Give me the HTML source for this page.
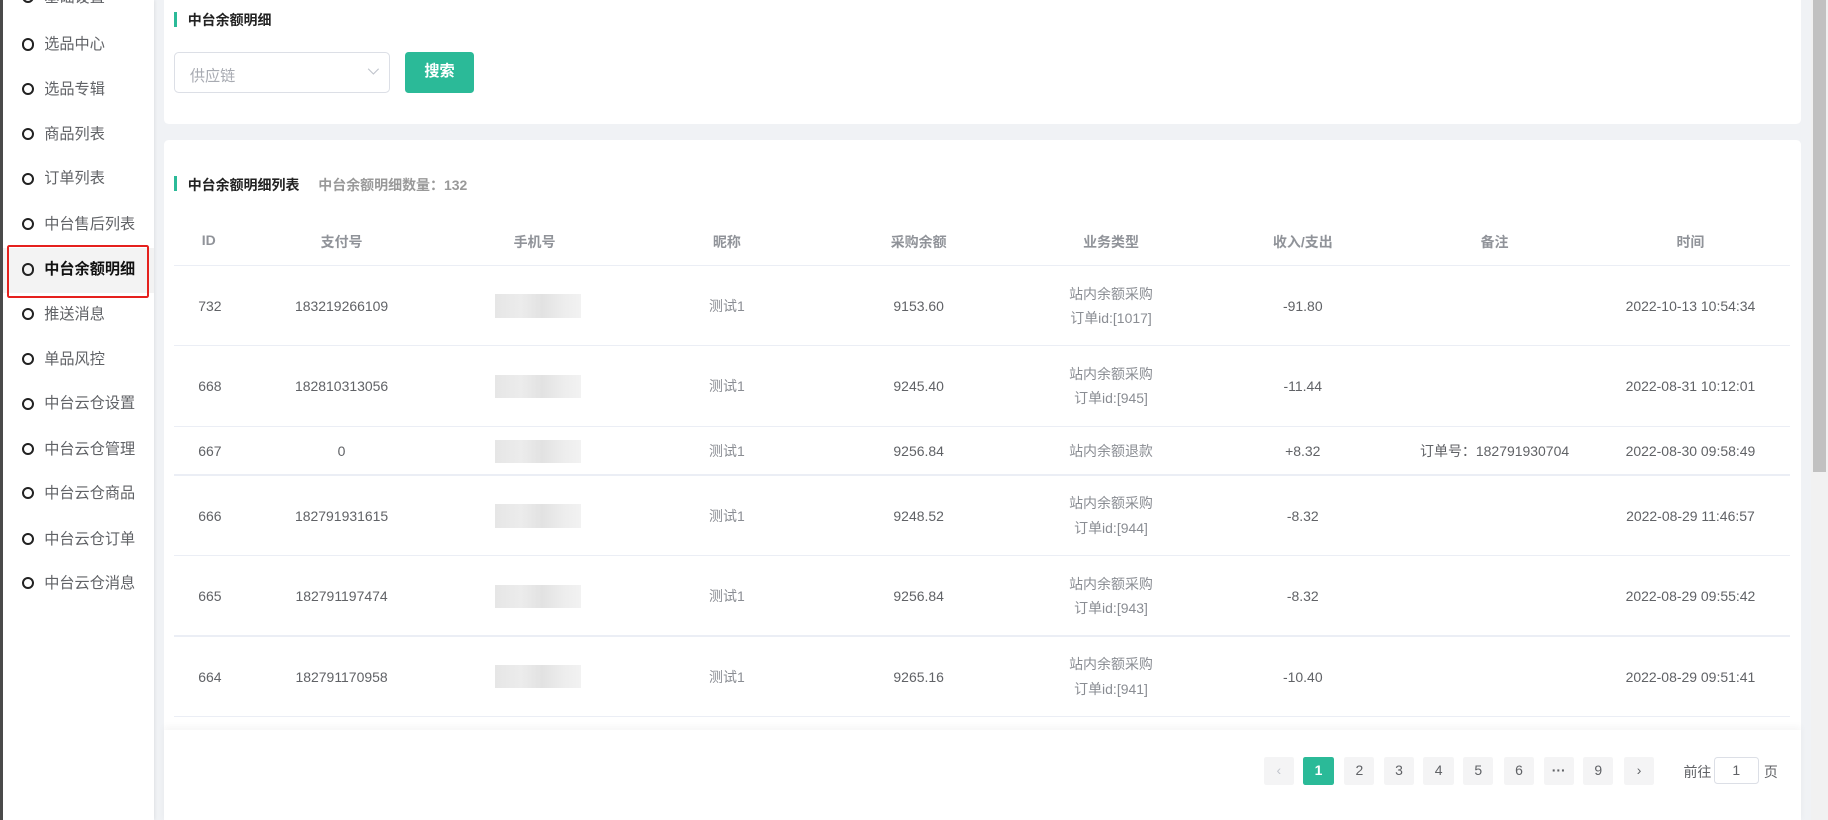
<!DOCTYPE html>
<html><head><meta charset="utf-8">
<style>
html,body{margin:0;padding:0;}
body{width:1828px;height:820px;overflow:hidden;background:#f0f2f5;font-family:"Liberation Sans","Noto Sans CJK SC",sans-serif;}
#w{position:relative;width:1568px;height:703px;zoom:1.16582;background:#f0f2f5;overflow:hidden;}
.abs{position:absolute;}
#side{left:0;top:0;width:132px;height:703px;background:#fff;box-shadow:1px 0 3px rgba(0,0,0,.08);}
#side .strip{left:0;top:0;width:3px;height:703px;background:#4a4a4a;}
.mi{position:absolute;left:3px;width:129px;height:38px;line-height:38px;font-size:13px;color:#606266;}
.mi i{position:absolute;left:16px;top:13px;width:7px;height:7px;border:2px solid #222;border-radius:50%;}
.mi span{position:absolute;left:35px;}
.mi.act{background:#f3f3f3;font-weight:bold;color:#111;}
#red{left:6px;top:210px;width:118px;height:42px;border:2px solid #e5201d;border-radius:2px;}
.card{background:#fff;border-radius:4px;}
.tt{position:absolute;font-size:12px;font-weight:bold;color:#222;}
.bar{position:absolute;width:3px;height:13px;background:#2bba98;}
.sel{left:149px;top:45px;width:184px;height:33px;border:1px solid #dcdfe6;border-radius:4px;background:#fff;}
.btn{left:347px;top:45px;width:60px;height:35px;background:#2bba98;border-radius:3px;color:#fff;font-size:13px;font-weight:bold;text-align:center;line-height:35px;}
.th,.td{position:absolute;text-align:center;font-size:12px;}
.th{color:#909399;font-weight:bold;top:199px;}
.td{color:#606266;}
.hl{position:absolute;left:149px;width:1386px;height:1px;background:#ebeef5;}
.blur{position:absolute;width:73px;height:20px;background:linear-gradient(90deg,#e6e6e6,#ececec 30%,#e2e2e2 55%,#ededed 80%,#f2f2f2);}
.pg{position:absolute;top:649px;width:26px;height:24px;background:#f4f4f5;border-radius:2px;font-size:12px;color:#606266;text-align:center;line-height:24px;}
</style></head><body><div id="w">
<div id="side" class="abs">
<div class="strip abs"></div>
<div class="mi" style="top:-21px"><i></i><span>基础设置</span></div>
<div class="mi" style="top:20px"><i></i><span>选品中心</span></div>
<div class="mi" style="top:58px"><i></i><span>选品专辑</span></div>
<div class="mi" style="top:97px"><i></i><span>商品列表</span></div>
<div class="mi" style="top:135px"><i></i><span>订单列表</span></div>
<div class="mi" style="top:174px"><i></i><span>中台售后列表</span></div>
<div class="mi act" style="top:213px"><i></i><span>中台余额明细</span></div>
<div class="mi" style="top:251px"><i></i><span>推送消息</span></div>
<div class="mi" style="top:290px"><i></i><span>单品风控</span></div>
<div class="mi" style="top:328px"><i></i><span>中台云仓设置</span></div>
<div class="mi" style="top:367px"><i></i><span>中台云仓管理</span></div>
<div class="mi" style="top:405px"><i></i><span>中台云仓商品</span></div>
<div class="mi" style="top:444px"><i></i><span>中台云仓订单</span></div>
<div class="mi" style="top:482px"><i></i><span>中台云仓消息</span></div>
</div>
<div id="red" class="abs"></div>

<div class="card abs" style="left:141px;top:-4px;width:1404px;height:110px"></div>
<div class="bar" style="left:149px;top:10px"></div>
<div class="tt" style="left:161px;top:9px">中台余额明细</div>
<div class="sel abs"><span class="abs" style="left:13px;top:9px;font-size:13px;color:#a8abb2">供应链</span>
<svg class="abs" style="left:165px;top:12px" width="11" height="8" viewBox="0 0 11 8"><path d="M1 1.5L5.5 6L10 1.5" fill="none" stroke="#c0c4cc" stroke-width="1"/></svg></div>
<div class="btn abs">搜索</div>

<div class="card abs" style="left:141px;top:120px;width:1404px;height:600px"></div>
<div class="bar" style="left:149px;top:151px"></div>
<div class="tt" style="left:161px;top:150px">中台余额明细列表</div>
<div class="tt" style="left:273px;top:150px;color:#999">中台余额明细数量：132</div>

<div class="th" style="left:149px;width:60px">ID</div>
<div class="th" style="left:210px;width:166px">支付号</div>
<div class="th" style="left:376px;width:165px">手机号</div>
<div class="th" style="left:541px;width:165px">昵称</div>
<div class="th" style="left:706px;width:164px">采购余额</div>
<div class="th" style="left:870px;width:166px">业务类型</div>
<div class="th" style="left:1036px;width:163px">收入/支出</div>
<div class="th" style="left:1199px;width:166px">备注</div>
<div class="th" style="left:1365px;width:170px">时间</div>
<div class="hl" style="top:227px"></div>
<div class="hl" style="top:296px"></div>
<div class="hl" style="top:365px"></div>
<div class="hl" style="top:407px"></div>
<div class="hl" style="top:476px"></div>
<div class="hl" style="top:545px"></div>
<div class="hl" style="top:614px"></div>

<div id="rows"></div>
<script>
var rows=[
[228,69,"732","183219266109","9153.60","站内余额采购<br>订单id:[1017]","-91.80","","2022-10-13 10:54:34"],
[297,69,"668","182810313056","9245.40","站内余额采购<br>订单id:[945]","-11.44","","2022-08-31 10:12:01"],
[366,42,"667","0","9256.84","站内余额退款","+8.32","订单号：182791930704","2022-08-30 09:58:49"],
[408,69,"666","182791931615","9248.52","站内余额采购<br>订单id:[944]","-8.32","","2022-08-29 11:46:57"],
[477,69,"665","182791197474","9256.84","站内余额采购<br>订单id:[943]","-8.32","","2022-08-29 09:55:42"],
[546,69,"664","182791170958","9265.16","站内余额采购<br>订单id:[941]","-10.40","","2022-08-29 09:51:41"]];
var cols=[[149,60],[210,166],[541,165],[706,164],[870,166],[1036,163],[1199,166],[1365,170]];
var h="";
rows.forEach(function(r){
 var c=r[0]+r[1]/2;
 var vals=[r[2],r[3],"测试1",r[4],r[5],r[6],r[7],r[8]];
 vals.forEach(function(v,i){
  var two=v.indexOf("<br>")>=0;
  var top=two?c-21:c-7;
  var col=(i==4||i==2)?"#8a8d93":"#606266";
  var left=i==0?cols[i][0]+21:cols[i][0];var w=i==0?40:cols[i][1];
  h+='<div class="td" style="left:'+left+'px;width:'+w+'px;top:'+top+'px;line-height:'+(two?21:14)+'px;color:'+col+';text-align:'+(i==0?'left':'center')+'">'+v+'</div>';
 });
 h+='<div class="blur" style="left:425px;top:'+(c-10)+'px"></div>';
});
document.getElementById("rows").innerHTML=h;
</script>

<div class="abs" style="left:141px;top:626px;width:1404px;height:80px;background:#fff;box-shadow:0 -3px 6px rgba(0,0,0,.04)"></div>
<div class="pg" style="left:1084px;color:#c0c4cc">&#8249;</div>
<div class="pg" style="left:1118px;background:#2bba98;color:#fff;font-weight:bold">1</div>
<div class="pg" style="left:1153px">2</div>
<div class="pg" style="left:1187px">3</div>
<div class="pg" style="left:1221px">4</div>
<div class="pg" style="left:1255px">5</div>
<div class="pg" style="left:1290px">6</div>
<div class="pg" style="left:1324px;font-weight:bold">···</div>
<div class="pg" style="left:1358px">9</div>
<div class="pg" style="left:1393px">&#8250;</div>
<div class="abs" style="left:1444px;top:654px;font-size:12px;color:#606266">前往</div>
<div class="abs" style="left:1470px;top:649px;width:37px;height:22px;border:1px solid #dcdfe6;border-radius:3px;background:#fff;font-size:12px;color:#606266;text-align:center;line-height:22px">1</div>
<div class="abs" style="left:1513px;top:654px;font-size:12px;color:#606266">页</div>

<div class="abs" style="left:1553px;top:0;width:15px;height:703px;background:#f1f1f1"></div>
<div class="abs" style="left:1555px;top:0;width:11px;height:405px;background:#c1c1c1"></div>
</div></body></html>
